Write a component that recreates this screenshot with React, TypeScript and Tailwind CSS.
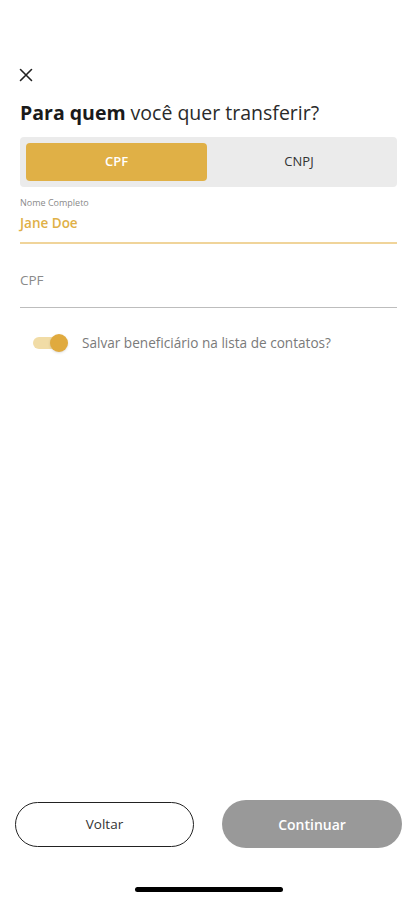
import { useState } from 'react';

export default function App() {
  const [docType, setDocType] = useState<'CPF' | 'CNPJ'>('CPF');
  const [saveContact, setSaveContact] = useState(true);

  return (
    <div
      className="relative w-[417px] h-[900px] bg-white overflow-hidden text-[#1a1a1a]"
      style={{ fontFamily: '"Open Sans", "Noto Sans", sans-serif' }}
    >
      {/* Header */}
      <div className="px-5 pt-[67px]">
        <button className="block w-[15px] h-[15px] -ml-px">
          <svg viewBox="0 0 14 14" className="w-[14px] h-[14px]" fill="none" stroke="#222" strokeWidth="1.6" strokeLinecap="round">
            <path d="M1.5 1.5 L12.5 12.5 M12.5 1.5 L1.5 12.5" />
          </svg>
        </button>
        <h1 className="mt-[18px] text-[19.5px] leading-[26px] text-[#2a2a2a]">
          <span className="font-bold text-[#1a1a1a]">Para quem</span> você quer transferir?
        </h1>
      </div>

      {/* Segmented control */}
      <div className="mx-5 mt-[11px] h-[50px] rounded-[4px] bg-[#ebebeb] p-[6px] flex">
        {(['CPF', 'CNPJ'] as const).map((t) => (
          <button
            key={t}
            onClick={() => setDocType(t)}
            className={`w-[181px] rounded-[4px] text-[13px] ${
              docType === t ? 'bg-[#e0b046] text-white font-semibold' : 'text-[#333] font-medium flex-1'
            }`}
          >
            {t}
          </button>
        ))}
      </div>

      {/* Nome Completo */}
      <div className="mx-5 mt-[10px] border-b-2 border-[#f0d49a] pb-[10px]">
        <div className="text-[9px] leading-[12px] text-[#8a8a8a]">Nome Completo</div>
        <div className="mt-[5px] text-[13.5px] leading-[18px] font-semibold text-[#e0b046]">Jane Doe</div>
      </div>

      {/* CPF */}
      <div className="mx-5 mt-[27px] border-b border-[#bdbdbd] pb-[18px]">
        <div className="text-[13.5px] leading-[18px] text-[#8a8a8a]">CPF</div>
      </div>

      {/* Toggle */}
      <div className="ml-[33px] mt-[25px] flex items-center">
        <button
          onClick={() => setSaveContact(!saveContact)}
          className="relative w-[34px] h-[18px] flex items-center"
        >
          <span className="block w-[30px] h-[12px] rounded-full bg-[#f1dca6]" />
          <span
            className={`absolute top-0 w-[18px] h-[18px] rounded-full bg-[#e0aa3e] shadow-sm ${
              saveContact ? 'left-[17px]' : 'left-0'
            }`}
          />
        </button>
        <span className="ml-[15px] text-[13.6px] text-[#7a7a7a]">Salvar beneficiário na lista de contatos?</span>
      </div>

      {/* Bottom buttons */}
      <div className="absolute left-0 right-0 top-[800px] px-[15px] flex items-center justify-between">
        <button className="w-[179px] h-[45px] rounded-full border-[1.5px] border-[#222] bg-white text-[13.5px] font-medium text-[#333]">
          Voltar
        </button>
        <button className="w-[180px] h-[48px] rounded-full bg-[#999999] text-[14px] font-semibold text-white">
          Continuar
        </button>
      </div>

      {/* Home indicator */}
      <div className="absolute left-[135px] top-[887px] w-[148px] h-[5px] rounded-full bg-black" />
    </div>
  );
}
